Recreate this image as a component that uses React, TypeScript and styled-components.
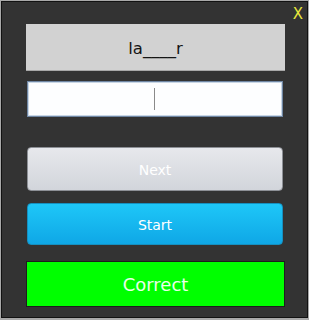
import React from "react";
import styled, { createGlobalStyle } from "styled-components";

const Global = createGlobalStyle`
  html, body { margin: 0; padding: 0; background: #333333; }
  body { font-family: "DejaVu Sans", Verdana, sans-serif; }
`;

const Frame = styled.div`
  width: 309px;
  height: 320px;
  box-sizing: border-box;
  border: 1px solid #a9a9a9;
  border-bottom-width: 2px;
  background: #333333;
`;

const Inner = styled.div`
  position: relative;
  height: 100%;
  box-sizing: border-box;
  border: 1px solid #121212;
  padding: 22px 22px 0 24px;
  display: flex;
  flex-direction: column;
`;

const Close = styled.span`
  position: absolute;
  top: 4px;
  right: 4px;
  color: #e8e83c;
  font-size: 15px;
  line-height: 17px;
`;

const WordBox = styled.div`
  height: 47px;
  background: #d2d2d2;
  border-bottom: 1px solid #a8a8a8;
  box-sizing: border-box;
  display: flex;
  align-items: center;
  justify-content: center;
  color: #151515;
  font-size: 16.5px;
  padding-top: 2px;
`;

const InputBox = styled.div`
  margin: 10px 2px 0 1px;
  height: 36px;
  box-sizing: border-box;
  background: #fdfeff;
  border: 1px solid #6f86a3;
  box-shadow: inset 0 0 0 1px #c9d7e6;
  display: flex;
  align-items: center;
  justify-content: center;
`;

const Caret = styled.span`
  width: 1px;
  height: 22px;
  background: #8a8a8a;
  margin-left: -2px;
`;

const Button = styled.div<{ $variant: "next" | "start"; $top: number; $h: number }>`
  margin: ${(p) => p.$top}px 2px 0 1px;
  height: ${(p) => p.$h}px;
  box-sizing: border-box;
  border-radius: 4px;
  border: 1px solid ${(p) => (p.$variant === "next" ? "#8d9096" : "#1590c0")};
  background: ${(p) =>
    p.$variant === "next"
      ? "linear-gradient(#e7e8ec, #d2d5db)"
      : "linear-gradient(#1ec7f8, #0fa7e6)"};
  color: #ffffff;
  font-size: 14px;
  padding-top: 1px;
  display: flex;
  align-items: center;
  justify-content: center;
`;

const Result = styled.div`
  margin-top: 16px;
  height: 46px;
  box-sizing: border-box;
  background: #00ff00;
  border: 1px solid #1d1d1d;
  color: #eaffea;
  font-size: 18px;
  display: flex;
  align-items: center;
  justify-content: center;
`;

export default function App() {
  return (
    <>
      <Global />
      <Frame>
        <Inner>
          <Close>X</Close>
          <WordBox>la____r</WordBox>
          <InputBox>
            <Caret />
          </InputBox>
          <Button $variant="next" $top={30} $h={44}>Next</Button>
          <Button $variant="start" $top={12} $h={42}>Start</Button>
          <Result>Correct</Result>
        </Inner>
      </Frame>
    </>
  );
}
